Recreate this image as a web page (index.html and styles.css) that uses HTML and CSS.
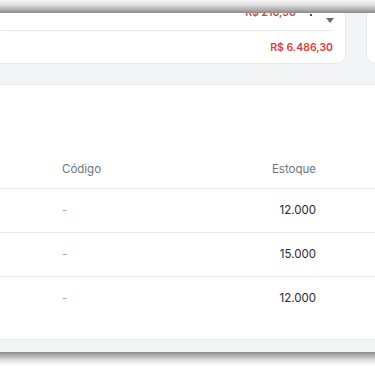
FILE: index.html
```html
<!DOCTYPE html>
<html lang="pt-BR">
<head>
<meta charset="utf-8">
<link rel="stylesheet" href="styles.css">
</head>
<body>
<div class="shot">
  <div class="page">
    <div class="summary">
      <div class="card card-left">
        <div class="line line-top">
          <span class="money money-prev">R$ 210,90</span>
          <span class="kebab"><i></i><i></i><i></i></span>
          <span class="caret"></span>
        </div>
        <div class="line line-total">
          <span class="money">R$ 6.486,30</span>
        </div>
      </div>
      <div class="card card-right"></div>
    </div>
    <div class="table-card">
      <div class="table-head-space"></div>
      <table class="grid">
        <thead>
          <tr><th class="c-code">Código</th><th class="c-stock">Estoque</th><th class="c-pad"></th></tr>
        </thead>
        <tbody>
          <tr><td class="c-code muted">-</td><td class="c-stock">12.000</td><td class="c-pad"></td></tr>
          <tr><td class="c-code muted">-</td><td class="c-stock">15.000</td><td class="c-pad"></td></tr>
          <tr class="last"><td class="c-code muted">-</td><td class="c-stock">12.000</td><td class="c-pad"></td></tr>
        </tbody>
      </table>
    </div>
  </div>
  <div class="shade shade-top"></div>
  <div class="shade shade-bottom"></div>
</div>
</body>
</html>
```
FILE: styles.css
```css
* { box-sizing: border-box; }
html, body { margin: 0; padding: 0; background: #ffffff; }
body { font-family: Inter, "Noto Sans", sans-serif; color: #111827; }

.shot {
  position: relative;
  width: 375px;
  height: 366px;
  overflow: hidden;
  background: #ffffff;
}

.page {
  height: 352px;
  background: #f3f4f6;
  overflow: hidden;
}

.summary {
  display: flex;
  gap: 20px;
  margin-top: -20px;
}

.card {
  background: #ffffff;
  border: 1px solid #e5e7eb;
  border-top: none;
}

.card-left {
  flex: 0 0 356px;
  margin-left: -10px;
  border-radius: 0 0 9px 0;
  padding: 0 12px 0 10px;
  height: 84px;
}

.card-right {
  flex: 1 0 60px;
  height: 84px;
  border-radius: 0 0 0 9px;
}

.line {
  display: flex;
  justify-content: flex-end;
}

.line-top {
  height: 51px;
  align-items: flex-end;
  border-bottom: 1px solid #e5e7eb;
}

.money-prev {
  line-height: 13px;
  margin-right: 13px;
  margin-bottom: 11px;
}

.kebab {
  display: flex;
  flex-direction: column;
  gap: 2px;
  width: 4px;
  align-items: center;
  margin-right: 13px;
  margin-bottom: 14px;
}
.kebab i {
  display: block;
  width: 2px;
  height: 2px;
  background: #111827;
  border-radius: 1px;
}

.caret {
  width: 0;
  height: 0;
  border-left: 4px solid transparent;
  border-right: 4px solid transparent;
  border-top: 5px solid #6b6b6b;
  margin-bottom: 7px;
  margin-right: -1px;
}

.line-total {
  height: 32px;
  align-items: center;
}

.money {
  color: #dc3c3c;
  font-weight: 600;
  font-size: 10.5px;
}

.table-card {
  margin-top: 20px;
  background: #ffffff;
  border-top: 1px solid #e5e7eb;
  border-bottom: 1px solid #e5e7eb;
  padding-bottom: 19px;
}

.table-head-space {
  height: 65px;
}

.grid {
  width: 100%;
  border-collapse: collapse;
  font-size: 11.5px;
}

.grid th {
  font-weight: 400;
  color: #6b7280;
  height: 38px;
  text-align: left;
  border-bottom: 1px solid #e5e7eb;
  padding: 0;
}

.grid td {
  height: 44px;
  padding: 0;
  border-bottom: 1px solid #e5e7eb;
  color: #1f2937;
}

.grid tr.last td { border-bottom: none; }

.c-code { padding-left: 62px !important; width: 200px; }
.c-stock { text-align: right !important; }
.c-pad { width: 59px; }

.muted { color: #9ca3af !important; }

.shade {
  position: absolute;
  left: 0;
  right: 0;
  pointer-events: none;
}

.shade-top {
  top: 0;
  height: 13px;
  background: linear-gradient(to bottom, #f6f6f6, #e2e2e2 35%, #b4b4b4 70%, #8a8a8a);
}

.shade-bottom {
  bottom: 0;
  height: 14px;
  background: linear-gradient(to bottom, rgba(0,0,0,0.45), rgba(0,0,0,0.12) 60%, rgba(0,0,0,0));
}
```
